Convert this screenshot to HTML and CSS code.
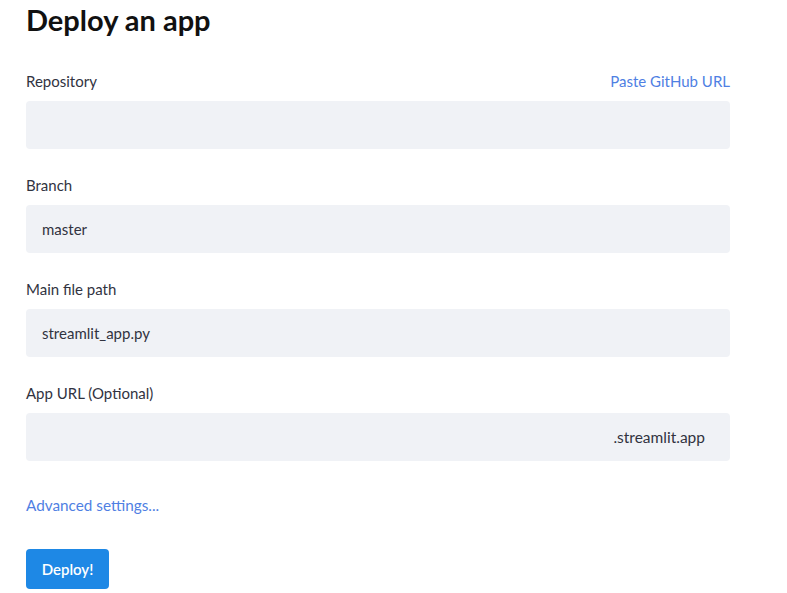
FILE: index.html
```html
<!DOCTYPE html>
<html lang="en">
<head>
  <meta charset="UTF-8">
  <meta name="viewport" content="width=device-width, initial-scale=1.0">
  <title>Deploy an app</title>
  <link rel="stylesheet" href="styles.css">
</head>
<body>
  <div class="page">
    <h1 class="title">Deploy an app</h1>

    <div class="field">
      <div class="label-row">
        <label for="repo">Repository</label>
        <a class="link" href="#">Paste GitHub URL</a>
      </div>
      <div class="input"><input id="repo" type="text"></div>
    </div>

    <div class="field">
      <div class="label-row">
        <label for="branch">Branch</label>
      </div>
      <div class="input"><input id="branch" type="text" value="master"></div>
    </div>

    <div class="field">
      <div class="label-row">
        <label for="main">Main file path</label>
      </div>
      <div class="input"><input id="main" type="text" value="streamlit_app.py"></div>
    </div>

    <div class="field">
      <div class="label-row">
        <label for="url">App URL (Optional)</label>
      </div>
      <div class="input">
        <input id="url" type="text">
        <span class="suffix">.streamlit.app</span>
      </div>
    </div>

    <a class="link advanced" href="#">Advanced settings...</a>

    <button class="deploy">Deploy!</button>
  </div>
</body>
</html>
```

FILE: styles.css
```css
* {
  margin: 0;
  padding: 0;
  box-sizing: border-box;
}
body {
  font-family: Lato, "Open Sans", sans-serif;
  color: #31333f;
  background: #fff;
}
.page {
  width: 704px;
  margin-left: 26px;
  display: flex;
  flex-direction: column;
  align-items: flex-start;
}
.title {
  font-size: 29px;
  line-height: 40px;
  font-weight: 700;
  color: #111;
  margin-bottom: 29px;
}
.field {
  width: 100%;
  margin-bottom: 24px;
}
.label-row {
  display: flex;
  justify-content: space-between;
  height: 24px;
  line-height: 24px;
  font-size: 15px;
  margin-bottom: 8px;
}
.link {
  color: #4f7fe3;
  text-decoration: none;
  font-size: 15px;
}
.input {
  display: flex;
  align-items: center;
  height: 48px;
  background: #f0f2f6;
  border-radius: 4px;
  padding: 0 25px 0 16px;
}
.input input {
  flex: 1;
  border: none;
  outline: none;
  background: none;
  font-family: inherit;
  font-size: 15px;
  color: #31333f;
}
.suffix {
  font-size: 15.5px;
}
.advanced {
  margin-top: 8px;
  line-height: 24px;
  font-size: 15.3px;
}
.deploy {
  margin-top: 32px;
  width: 83px;
  height: 40px;
  border: none;
  border-radius: 4px;
  background: #1e88e5;
  color: #fff;
  font-family: inherit;
  font-size: 15px;
  font-weight: 600;
}
```
